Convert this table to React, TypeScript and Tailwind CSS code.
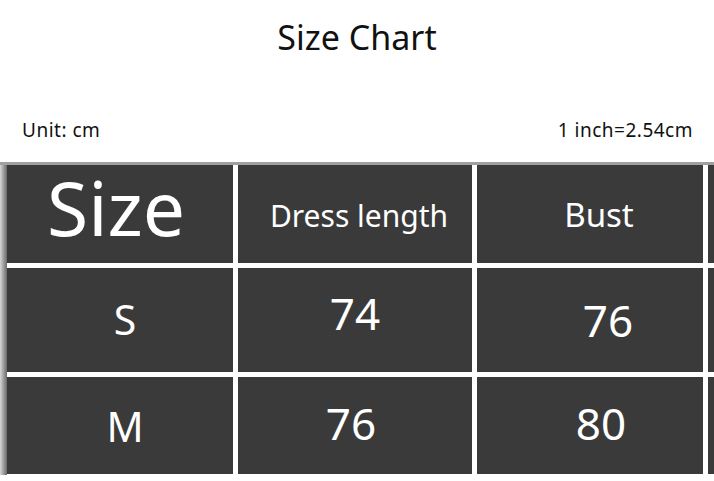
import React from 'react';

const font = { fontFamily: '"Noto Sans", "Open Sans", sans-serif' };

const cell = 'bg-[#3a3a3a] flex items-center justify-center text-white';

export default function App() {
    return (
        <div className="w-[714px] h-[481px] bg-white overflow-hidden" style={font}>
            <div className="pt-[13px] h-[60px] text-center text-[34px] leading-[48px] text-[#111]">Size Chart</div>

            <div className="h-[102px] flex items-end justify-between pl-[22px] pr-[21px] pb-[20px] text-[19px] leading-[24px] tracking-[0.5px] text-[#111]">
                <span>Unit: cm</span>
                <span>1 inch=2.54cm</span>
            </div>

            <div className="flex border-t-[3px] border-[#a0a0a0] h-[313px]">
                <div className="w-[7px] bg-gradient-to-r from-[#d8d8d8] to-[#6a6a6a]" />
                <div className="flex-1 grid grid-cols-[226px_234px_226px_1fr] grid-rows-[98px_104px_97px] gap-x-[5px] gap-y-[5px] pb-[3px]">
                    <div className={`${cell} text-[75px] leading-none pb-[14px] pr-[8px]`}>Size</div>
                    <div className={`${cell} text-[30px] pt-[2px] pl-[8px]`}>Dress length</div>
                    <div className={`${cell} text-[33px] pt-[2px] pl-[18px]`}>Bust</div>
                    <div className="bg-[#3a3a3a]" />

                    <div className={`${cell} text-[41px] pl-[10px]`}>S</div>
                    <div className={`${cell} text-[44px] pb-[14px]`}>74</div>
                    <div className={`${cell} text-[44px] pl-[36px]`}>76</div>
                    <div className="bg-[#3a3a3a]" />

                    <div className={`${cell} text-[41px] pl-[10px] pt-[2px]`}>M</div>
                    <div className={`${cell} text-[44px] pb-[6px] pr-[8px]`}>76</div>
                    <div className={`${cell} text-[44px] pb-[6px] pl-[22px]`}>80</div>
                    <div className="bg-[#3a3a3a]" />
                </div>
            </div>
        </div>
    );
}
